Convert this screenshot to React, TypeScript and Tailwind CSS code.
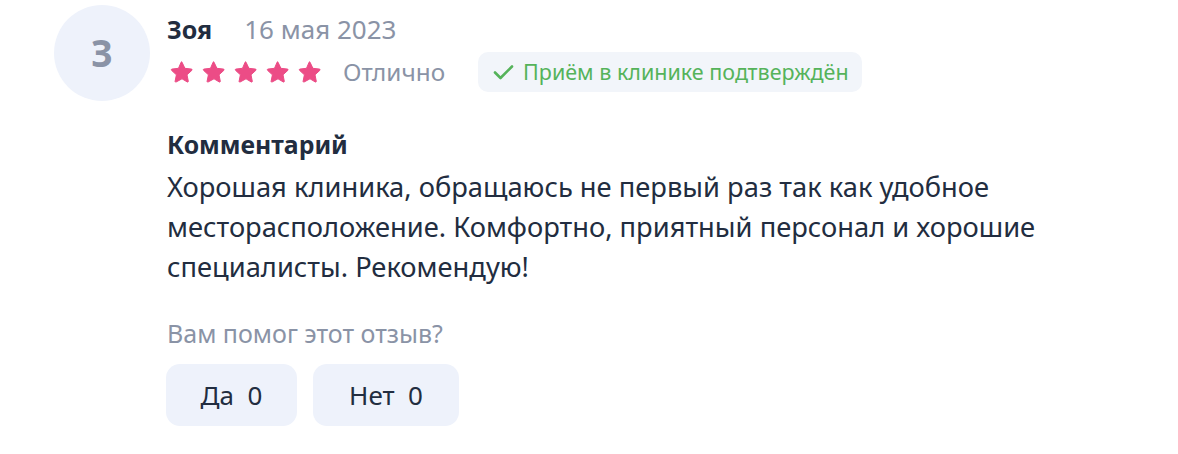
import React from "react";

const Star = () => (
  <svg width="24" height="24" viewBox="0 0 24 24" className="shrink-0">
    <path
      d="M12 2.2l2.9 6.1 6.6.8c.6.1.8.8.4 1.2l-4.9 4.5 1.3 6.5c.1.6-.5 1-1 .7L12 18.8 6.1 22c-.5.3-1.1-.1-1-.7l1.3-6.5-4.9-4.5c-.4-.4-.2-1.1.4-1.2l6.6-.8L11.1 2.2c.2-.5 1-.5.9 0z"
      fill="#ec4c86"
      stroke="#ec4c86"
      strokeWidth="1"
      strokeLinejoin="round"
    />
  </svg>
);

export default function App() {
  return (
    <div
      className="w-[1178px] h-[454px] bg-white text-[#222d40] flex"
      style={{ fontFamily: '"Noto Sans", "Open Sans", sans-serif' }}
    >
      <div className="pl-[54px] pt-[5px]">
        <div className="w-[96px] h-[96px] rounded-full bg-[#eef2fb] flex items-center justify-center text-[37px] font-bold text-[#8a93a6]">
          З
        </div>
      </div>
      <div className="pl-[17px] pt-[10px] flex flex-col">
        <div className="flex items-center h-[38px] leading-[38px]">
          <span className="text-[25px] font-bold">Зоя</span>
          <span className="ml-[32px] text-[26px] text-[#8a93a6]">16 мая 2023</span>
        </div>
        <div className="flex items-center mt-[4px] h-[40px]">
          <div className="flex gap-[8px] pl-[3px]">
            <Star />
            <Star />
            <Star />
            <Star />
            <Star />
          </div>
          <span className="ml-[21px] text-[24.3px] text-[#8a93a6]">Отлично</span>
          <div className="ml-[33px] h-[40px] w-[384px] pl-[15px] rounded-[10px] bg-[#f2f5fa] flex items-center gap-[9px] text-[21.5px] text-[#55b35a]">
            <svg width="21" height="16" viewBox="0 0 21 16" fill="none">
              <path d="M2 8.5l5.5 5.5L19 2.5" stroke="#55b35a" strokeWidth="2.6" strokeLinecap="round" strokeLinejoin="round" />
            </svg>
            <span>Приём в клинике подтверждён</span>
          </div>
        </div>
        <div className="mt-[36px] text-[24.8px] font-bold leading-[32px]">Комментарий</div>
        <div className="text-[27.3px] leading-[40px] w-[920px] mt-[7px]">
          Хорошая клиника, обращаюсь не первый раз так как удобное
          <br />
          месторасположение. Комфортно, приятный персонал и хорошие
          <br />
          специалисты. Рекомендую!
        </div>
        <div className="mt-[31px] text-[25px] text-[#8a93a6] leading-[30px]">Вам помог этот отзыв?</div>
        <div className="flex gap-[16px] mt-[16px] -ml-[1px]">
          <button className="h-[62px] w-[131px] rounded-[14px] bg-[#eef2fb] text-[26px] text-[#222d40]">
            Да&nbsp;&nbsp;0
          </button>
          <button className="h-[62px] w-[146px] rounded-[14px] bg-[#eef2fb] text-[26px] text-[#222d40]">
            Нет&nbsp;&nbsp;0
          </button>
        </div>
      </div>
    </div>
  );
}
